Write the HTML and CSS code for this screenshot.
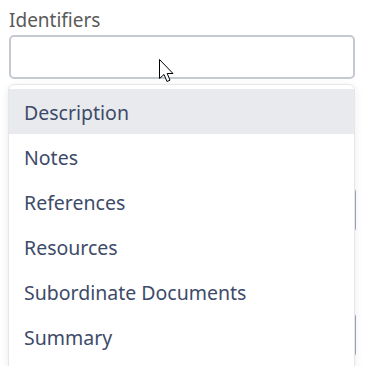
FILE: index.html
```html
<!DOCTYPE html>
<html lang="en">
<head>
    <meta charset="UTF-8">
    <title>Identifiers</title>
    <link rel="stylesheet" href="styles.css">
</head>
<body>
    <div class="form">
        <div class="field">
            <label class="field-label" for="identifiers">Identifiers</label>
            <div class="select-wrap">
                <input type="text" id="identifiers" class="field-input">
                <ul class="menu">
                    <li class="menu-item active">Description</li>
                    <li class="menu-item">Notes</li>
                    <li class="menu-item">References</li>
                    <li class="menu-item">Resources</li>
                    <li class="menu-item">Subordinate Documents</li>
                    <li class="menu-item">Summary</li>
                </ul>
                <svg class="cursor" width="18" height="28" viewBox="0 0 18 28">
                    <path d="M1.5 1.5 L1.5 20.5 L6 16.5 L9 23.5 L12 22.2 L9.2 15.5 L15 15.5 Z" fill="#fff" stroke="#000" stroke-width="1"/>
                </svg>
            </div>
        </div>
        <div class="field field-first">
            <div class="field-input ghost"></div>
        </div>
        <div class="field field-second">
            <div class="field-input ghost"></div>
        </div>
    </div>
</body>
</html>
```

FILE: styles.css
```css
body {
    margin: 0;
    min-height: 100vh;
    background-color: #fff;
    font-family: "Noto Sans", "Open Sans", sans-serif;
}
.form {
    padding: 8px 10px 0 9px;
    display: flex;
    flex-direction: column;
}
.field-label {
    display: block;
    font-size: 19px;
    line-height: 24px;
    color: #5a5a5a;
    margin-bottom: 3px;
}
.select-wrap {
    position: relative;
}
.field-input {
    display: block;
    width: 100%;
    height: 44px;
    box-sizing: border-box;
    border: 2px solid #c5c9d2;
    border-radius: 5px;
    background-color: #fff;
    font: inherit;
    outline: none;
}
.field-first {
    margin-top: 108px;
}
.field-second {
    margin-top: 79px;
}
.ghost {
    width: auto;
    height: 46px;
    margin-right: -1px;
    border-width: 1px;
    border-color: #9ea6b6;
}
.menu {
    position: absolute;
    top: 49px;
    left: -1px;
    right: 0;
    margin: 0;
    padding: 4px 0 12px;
    list-style: none;
    background-color: #fff;
    border: 1px solid #e6e7eb;
    border-radius: 6px;
    box-shadow: 0 2px 8px rgba(0, 0, 0, 0.08);
    z-index: 2;
}
.menu-item {
    height: 45px;
    line-height: 47px;
    padding-left: 15px;
    font-size: 19.5px;
    color: #3d4a69;
}
.menu-item.active {
    background-color: #e9eaee;
}
.cursor {
    position: absolute;
    left: 149px;
    top: 23px;
    z-index: 3;
}
```
